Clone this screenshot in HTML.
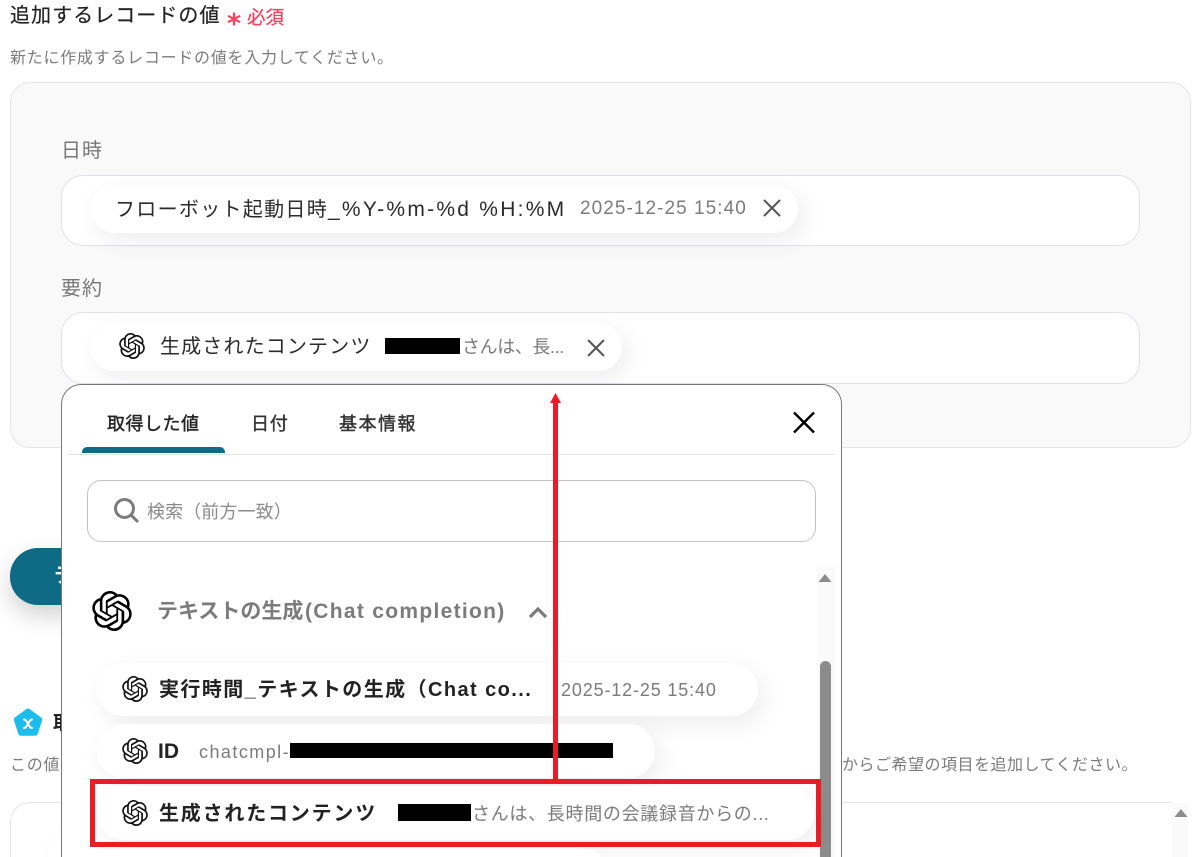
<!DOCTYPE html>
<html lang="ja">
<head>
<meta charset="utf-8">
<title>追加するレコードの値</title>
<style>
html,body{margin:0;padding:0;background:#fff;width:1200px;height:857px;overflow:hidden;}
#w{width:1200px;height:857px;overflow:hidden;position:relative;font-family:"Liberation Sans","Noto Sans CJK JP",sans-serif;color:#222;}
.a{position:absolute;white-space:nowrap;}
.t{position:absolute;white-space:nowrap;line-height:1;}
.chip{position:absolute;background:#fff;border-radius:27px;box-shadow:6px 8px 24px rgba(0,0,0,.07);}
.input{position:absolute;left:61px;width:1077px;height:69px;background:#fff;border:1px solid #dfe1e8;border-radius:22px;}
.g{color:#7b7b7b;}
.box{position:absolute;background:#000;}
svg{position:absolute;display:block;}
</style>
</head>
<body>
<div id="w">
<svg width="0" height="0" style="position:absolute"><defs>
<symbol id="oa" viewBox="0 0 24 24"><path fill="currentColor" d="M22.2819 9.8211a5.9847 5.9847 0 0 0-.5157-4.9108 6.0462 6.0462 0 0 0-6.5098-2.9A6.0651 6.0651 0 0 0 4.9807 4.1818a5.9847 5.9847 0 0 0-3.9977 2.9 6.0462 6.0462 0 0 0 .7427 7.0966 5.98 5.98 0 0 0 .511 4.9107 6.051 6.051 0 0 0 6.5146 2.9001A5.9847 5.9847 0 0 0 13.2599 24a6.0557 6.0557 0 0 0 5.7718-4.2058 5.9894 5.9894 0 0 0 3.9977-2.9001 6.0557 6.0557 0 0 0-.7475-7.0729zm-9.022 12.6081a4.4755 4.4755 0 0 1-2.8764-1.0408l.1419-.0804 4.7783-2.7582a.7948.7948 0 0 0 .3927-.6813v-6.7369l2.02 1.1686a.071.071 0 0 1 .038.052v5.5826a4.504 4.504 0 0 1-4.4945 4.4944zm-9.6607-4.1254a4.4708 4.4708 0 0 1-.5346-3.0137l.142.0852 4.783 2.7582a.7712.7712 0 0 0 .7806 0l5.8428-3.3685v2.3324a.0804.0804 0 0 1-.0332.0615L9.74 19.9502a4.4992 4.4992 0 0 1-6.1408-1.6464zM2.3408 7.8956a4.485 4.485 0 0 1 2.3655-1.9728V11.6a.7664.7664 0 0 0 .3879.6765l5.8144 3.3543-2.0201 1.1685a.0757.0757 0 0 1-.071 0l-4.8303-2.7865A4.504 4.504 0 0 1 2.3408 7.872zm16.5963 3.8558L13.1038 8.364 15.1192 7.2a.0757.0757 0 0 1 .071 0l4.8303 2.7913a4.4944 4.4944 0 0 1-.6765 8.1042v-5.6772a.79.79 0 0 0-.407-.667zm2.0107-3.0231l-.142-.0852-4.7735-2.7818a.7759.7759 0 0 0-.7854 0L9.409 9.2297V6.8974a.0662.0662 0 0 1 .0284-.0615l4.8303-2.7866a4.4992 4.4992 0 0 1 6.6802 4.66zM8.3065 12.863l-2.02-1.1638a.0804.0804 0 0 1-.038-.0567V6.0742a4.4992 4.4992 0 0 1 7.3757-3.4537l-.142.0805L8.704 5.459a.7948.7948 0 0 0-.3927.6813zm1.0976-2.3654l2.602-1.4998 2.6069 1.4998v2.9994l-2.5974 1.4997-2.6067-1.4997Z"/></symbol>
</defs></svg>

<!-- header -->
<div class="t" style="left:10px;top:6px;font-size:20px;letter-spacing:1.05px;color:#222;-webkit-text-stroke:.2px #222;">追加するレコードの値</div>
<svg style="left:226px;top:11px" width="16" height="16" viewBox="0 0 16 16"><path d="M8 1.5v13M2 4.8l12 6.4M14 4.8L2 11.2" stroke="#f9415f" stroke-width="2.2" fill="none"/></svg>
<div class="t" style="left:247px;top:9px;font-size:18.5px;color:#f9415f;-webkit-text-stroke:.3px #f9415f;">必須</div>
<div class="t g" style="left:10px;top:51px;font-size:16px;letter-spacing:.73px;">新たに作成するレコードの値を入力してください。</div>

<!-- panel -->
<div class="a" style="left:10px;top:82px;width:1179px;height:364px;background:#f9f9f9;border:1px solid #e4e4e4;border-radius:20px;"></div>
<div class="t" style="left:61px;top:141px;font-size:20px;letter-spacing:1px;color:#777;">日時</div>
<div class="input" style="top:175px;"></div>
<div class="chip" style="left:91px;top:185px;width:707px;height:48px;border-radius:24px;"></div>
<div class="t" style="left:115px;top:199px;font-size:20px;letter-spacing:1.3px;color:#2b2b2b;">フローボット起動日時<span style="font-size:21px;letter-spacing:2.25px;">_%Y-%m-%d %H:%M</span></div>
<div class="t g" style="left:580px;top:199px;font-size:19px;letter-spacing:1.05px;">2025-12-25 15:40</div>
<svg style="left:762px;top:198px" width="20" height="20" viewBox="0 0 20 20"><path d="M2 2l16 16M18 2L2 18" stroke="#555" stroke-width="2" fill="none"/></svg>

<div class="t" style="left:61px;top:279px;font-size:20px;letter-spacing:1px;color:#777;">要約</div>
<div class="input" style="top:312px;height:70px;"></div>
<div class="chip" style="left:91px;top:323px;width:531px;height:48px;border-radius:24px;"></div>
<svg style="left:119px;top:333px;color:#111" width="26" height="26"><use href="#oa"/></svg>
<div class="t" style="left:160px;top:337px;font-size:20px;letter-spacing:1.15px;color:#2b2b2b;">生成されたコンテンツ</div>
<div class="box" style="left:385px;top:338px;width:75px;height:16px;"></div>
<div class="t g" style="left:462px;top:338px;font-size:18px;letter-spacing:-.4px;">さんは、長...</div>
<svg style="left:586px;top:338px" width="20" height="20" viewBox="0 0 20 20"><path d="M2 2l16 16M18 2L2 18" stroke="#555" stroke-width="2" fill="none"/></svg>

<!-- background behind popup -->
<div class="a" style="left:10px;top:548px;width:200px;height:57px;background:#0e6a85;border-radius:28px;box-shadow:0 10px 24px rgba(0,0,0,.18);"></div>
<div class="t" style="left:54px;top:566px;font-size:20px;color:#fff;font-weight:700;">テ</div>
<svg style="left:12px;top:707px" width="32" height="32" viewBox="0 0 32 32"><path d="M16 1.5a2.5 2.5 0 0 1 1.5.5l11.5 8.4a3 3 0 0 1 1 3.2l-4.3 13.2a3 3 0 0 1-2.8 2H9.1a3 3 0 0 1-2.8-2L2 13.6a3 3 0 0 1 1-3.2L14.5 2a2.5 2.5 0 0 1 1.5-.5z" fill="#1cbcec"/><path d="M12 12.5q1.5 0 2.5 1.8l3 5q1 1.7 2.5 1.7M20 12.5q-1.5 0-2.5 1.8l-3 5q-1 1.7-2.5 1.7" stroke="#fff" stroke-width="2" stroke-linecap="round" fill="none"/></svg>
<div class="t" style="left:53px;top:714px;font-size:19px;font-weight:700;color:#222;">取</div>
<div class="t g" style="left:10px;top:758px;font-size:16px;letter-spacing:.7px;">この値</div>
<div class="t g" style="left:842px;top:758px;font-size:16px;letter-spacing:.5px;">からご希望の項目を追加してください。</div>
<div class="a" style="left:10px;top:802px;width:1178px;height:55px;box-sizing:border-box;background:#fff;border:1px solid #e4e4e4;border-bottom:0;border-radius:20px 20px 0 0;"></div>
<div class="a" style="left:1172px;top:803px;width:16px;height:54px;background:#fafafa;"></div>
<svg style="left:1174px;top:808px" width="14" height="10"><path d="M7 1l6.5 8H.5z" fill="#8c8c8c"/></svg>
<div class="chip" style="left:48px;top:830px;width:400px;height:27px;border-radius:27px 27px 0 0;"></div>

<!-- popup -->
<div class="a" style="left:61px;top:384px;width:781px;height:473px;box-sizing:border-box;background:#fff;border:1px solid #777;border-bottom:0;border-radius:20px 20px 0 0;"></div>
<div class="t" style="left:107px;top:415px;font-size:18px;letter-spacing:.5px;color:#222;-webkit-text-stroke:.4px #222;">取得した値</div>
<div class="t" style="left:251px;top:415px;font-size:18px;letter-spacing:.8px;color:#333;-webkit-text-stroke:.4px #333;">日付</div>
<div class="t" style="left:339px;top:415px;font-size:18px;letter-spacing:1.5px;color:#333;-webkit-text-stroke:.4px #333;">基本情報</div>
<div class="a" style="left:82px;top:447px;width:143px;height:6px;background:#0e6a85;border-radius:5px 5px 0 0;"></div>
<div class="a" style="left:68px;top:454px;width:767px;height:1px;background:#e4e4e4;"></div>
<svg style="left:792px;top:411px" width="24" height="23" viewBox="0 0 24 23"><path d="M2 1.5l20 20M22 1.5L2 21.5" stroke="#000" stroke-width="2.4" fill="none"/></svg>

<div class="a" style="left:87px;top:480px;width:727px;height:60px;border:1px solid #c4c4c4;border-radius:14px;background:#fff;"></div>
<svg style="left:113px;top:497px" width="27" height="27" viewBox="0 0 27 27"><circle cx="11.5" cy="11.5" r="9" stroke="#7b7b7b" stroke-width="3" fill="none"/><path d="M18 18l7 7" stroke="#7b7b7b" stroke-width="3" fill="none"/></svg>
<div class="t" style="left:147px;top:503px;font-size:18px;letter-spacing:.1px;color:#8a8a8a;">検索（前方一致）</div>

<!-- scrollbar -->
<div class="a" style="left:817px;top:567px;width:18px;height:290px;background:#fafafa;"></div>
<svg style="left:818px;top:573px" width="14" height="10"><path d="M7 1l6.5 8H.5z" fill="#8c8c8c"/></svg>
<div class="a" style="left:820px;top:661px;width:11px;height:196px;background:#8c8c8c;border-radius:6px 6px 0 0;"></div>

<!-- section -->
<svg style="left:92px;top:591px;color:#000" width="40" height="40"><use href="#oa"/></svg>
<div class="t" style="left:157px;top:601px;font-size:21px;font-weight:700;color:#7b7b7b;">テキストの生成</div>
<div class="t" style="left:305px;top:601px;font-size:21px;font-weight:700;letter-spacing:1.3px;color:#7b7b7b;">(Chat completion)</div>
<svg style="left:528px;top:605px" width="20" height="14" viewBox="0 0 20 14"><path d="M2 12l8-8 8 8" stroke="#7b7b7b" stroke-width="3.2" fill="none"/></svg>

<!-- chips -->
<div class="chip" style="left:97px;top:663px;width:661px;height:53px;"></div>
<svg style="left:122px;top:676px;color:#111" width="26" height="26"><use href="#oa"/></svg>
<div class="t" style="left:159px;top:680px;font-size:20px;font-weight:700;letter-spacing:1.42px;color:#222;">実行時間_テキストの生成（Chat co...</div>
<div class="t g" style="left:561px;top:681px;font-size:18px;letter-spacing:.85px;">2025-12-25 15:40</div>

<div class="chip" style="left:97px;top:724px;width:558px;height:54px;"></div>
<svg style="left:122px;top:738px;color:#111" width="26" height="26"><use href="#oa"/></svg>
<div class="t" style="left:158px;top:741px;font-size:21px;font-weight:700;color:#222;">ID</div>
<div class="t g" style="left:199px;top:743px;font-size:18px;letter-spacing:1.45px;">chatcmpl-</div>
<div class="box" style="left:290px;top:743px;width:323px;height:15px;"></div>

<div class="chip" style="left:97px;top:786px;width:717px;height:54px;"></div>
<svg style="left:122px;top:800px;color:#111" width="26" height="26"><use href="#oa"/></svg>
<div class="t" style="left:159px;top:804px;font-size:20px;font-weight:700;letter-spacing:1.8px;color:#222;">生成されたコンテンツ</div>
<div class="box" style="left:398px;top:804px;width:73px;height:17px;"></div>
<div class="t g" style="left:472px;top:805px;font-size:18px;letter-spacing:.7px;">さんは、長時間の会議録音からの...</div>

<div class="chip" style="left:97px;top:848px;width:503px;height:9px;border-radius:27px 27px 0 0 / 9px 9px 0 0;"></div>

<!-- annotations -->
<div class="a" style="left:90px;top:779px;width:721px;height:58px;border:5px solid #ed1c24;"></div>
<div class="a" style="left:553px;top:402px;width:5px;height:379px;background:#ed1c24;"></div>
<svg style="left:550px;top:393px" width="11" height="10"><path d="M5.5 0L11 10H0z" fill="#ed1c24"/></svg>
</div>
</body>
</html>
